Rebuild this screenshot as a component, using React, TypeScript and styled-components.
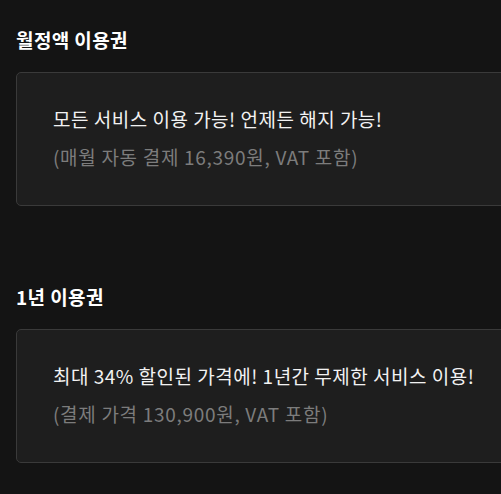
import styled, { createGlobalStyle } from "styled-components";

const GlobalStyle = createGlobalStyle`
  html, body {
    margin: 0;
    padding: 0;
    background: #141414;
    overflow: hidden;
  }
  body {
    font-family: "Noto Sans CJK KR", "Noto Sans", sans-serif;
    color: #fff;
  }
`;

interface Plan {
  title: string;
  desc: string;
  price: string;
}

const plans: Plan[] = [
  {
    title: "월정액 이용권",
    desc: "모든 서비스 이용 가능! 언제든 해지 가능!",
    price: "(매월 자동 결제 16,390원, VAT 포함)",
  },
  {
    title: "1년 이용권",
    desc: "최대 34% 할인된 가격에! 1년간 무제한 서비스 이용!",
    price: "(결제 가격 130,900원, VAT 포함)",
  },
];

export default function App() {
  return (
    <>
      <GlobalStyle />
      <Page>
        {plans.map((plan) => (
          <Section key={plan.title}>
            <Title>{plan.title}</Title>
            <Card>
              <Desc>{plan.desc}</Desc>
              <Price>{plan.price}</Price>
            </Card>
          </Section>
        ))}
      </Page>
    </>
  );
}

const Page = styled.div`
  padding: 26px 0 0 16px;
  display: flex;
  flex-direction: column;
  gap: 77px;
  width: 700px;
`;

const Section = styled.section`
  display: flex;
  flex-direction: column;
  gap: 18px;
`;

const Title = styled.h2`
  margin: 0;
  font-size: 19px;
  line-height: 28px;
  font-weight: 700;
  letter-spacing: 0.4px;
  color: #fff;
`;

const Card = styled.div`
  width: 600px;
  padding: 32px 36px 34px;
  background: #1e1e1e;
  border: 1px solid #3a3a3a;
  border-radius: 5px;
  display: flex;
  flex-direction: column;
  gap: 10px;
`;

const Desc = styled.p`
  margin: 0;
  font-size: 19px;
  line-height: 28px;
  letter-spacing: 0.5px;
  color: #f2f2f2;
`;

const Price = styled.p`
  margin: 0;
  font-size: 19px;
  line-height: 28px;
  letter-spacing: 0.7px;
  color: #7c7c7c;
`;
